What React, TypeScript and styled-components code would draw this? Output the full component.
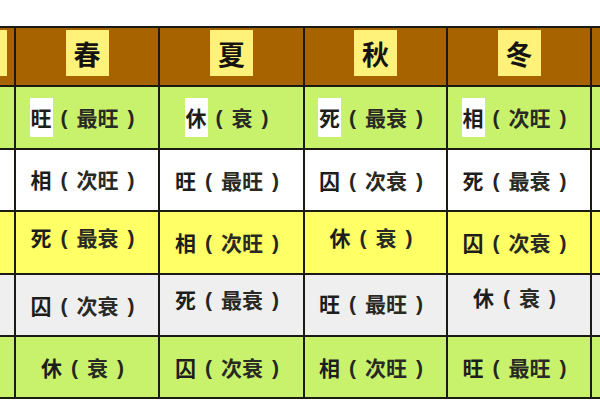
import React from "react";
import styled, { createGlobalStyle } from "styled-components";

const Global = createGlobalStyle`
  html, body { margin: 0; padding: 0; background: #ffffff; }
  body { width: 600px; height: 400px; overflow: hidden; font-family: "Noto Sans CJK SC", "Noto Sans", sans-serif; }
`;

const Page = styled.div`
  width: 600px;
  height: 400px;
  padding-top: 26px;
  box-sizing: border-box;
  background: #ffffff;
`;

const Grid = styled.div`
  display: grid;
  grid-template-columns: 14px 142px 143px 141px 142px 1fr;
  grid-template-rows: 57px 61px 60px 61px 60px 60px;
  gap: 2px;
  padding: 2px 0;
  background: #1c1a14;
`;

const HeadCell = styled.div<{ $edge?: "left" | "right" }>`
  background: #a66300;
  display: flex;
  align-items: flex-start;
  justify-content: ${(p) => (p.$edge === "left" ? "flex-end" : "center")};
  padding-top: 2px;
  padding-right: ${(p) => (p.$edge === "left" ? "7px" : "0")};
  overflow: hidden;
`;

const SeasonBox = styled.div`
  flex: 0 0 43px;
  width: 43px;
  height: 46px;
  background: #fff27a;
  display: flex;
  align-items: center;
  justify-content: center;
  font-size: 27px;
  font-weight: 700;
  color: #161410;
  line-height: 1;
`;

const rowColors = ["#c9f26c", "#ffffff", "#ffff66", "#efefef", "#c9f26c"];

const BodyCell = styled.div<{ $row: number }>`
  background: ${(p) => rowColors[p.$row]};
  display: flex;
  align-items: center;
  justify-content: center;
  overflow: hidden;
`;

const Entry = styled.div<{ $dy: number }>`
  display: flex;
  align-items: center;
  font-size: 21px;
  font-weight: 700;
  color: #1d1d1b;
  line-height: 1;
  transform: translateY(${(p) => p.$dy}px);
`;

const Lead = styled.span<{ $hl: boolean }>`
  display: inline-block;
  padding: 9px 1px;
  margin: 0 -1px;
  background: ${(p) => (p.$hl ? "#ffffff" : "transparent")};
`;

const Paren = styled.span`
  display: inline-block;
  margin: 0 9px;
  font-family: "Liberation Sans", sans-serif;
  font-weight: 700;
  color: #26261f;
`;

const Note = styled.span`
  color: #2a2a24;
`;

const seasons = ["春", "夏", "秋", "冬"];

type Item = { s: string; n: string; dy?: number };

const rows: Item[][] = [
  [
    { s: "旺", n: "最旺" },
    { s: "休", n: "衰" },
    { s: "死", n: "最衰" },
    { s: "相", n: "次旺" },
  ],
  [
    { s: "相", n: "次旺", dy: -1 },
    { s: "旺", n: "最旺" },
    { s: "囚", n: "次衰" },
    { s: "死", n: "最衰" },
  ],
  [
    { s: "死", n: "最衰", dy: -5 },
    { s: "相", n: "次旺" },
    { s: "休", n: "衰", dy: -5 },
    { s: "囚", n: "次衰" },
  ],
  [
    { s: "囚", n: "次衰" },
    { s: "死", n: "最衰", dy: -6 },
    { s: "旺", n: "最旺", dy: -2 },
    { s: "休", n: "衰", dy: -8 },
  ],
  [
    { s: "休", n: "衰" },
    { s: "囚", n: "次衰" },
    { s: "相", n: "次旺" },
    { s: "旺", n: "最旺" },
  ],
];

export default function App() {
  return (
    <>
      <Global />
      <Page>
        <Grid>
          <HeadCell $edge="left">
            <SeasonBox>季</SeasonBox>
          </HeadCell>
          {seasons.map((s) => (
            <HeadCell key={s}>
              <SeasonBox>{s}</SeasonBox>
            </HeadCell>
          ))}
          <HeadCell $edge="right" />
          {rows.map((row, r) => (
            <React.Fragment key={r}>
              <BodyCell $row={r} />
              {row.map((it, c) => (
                <BodyCell $row={r} key={c}>
                  <Entry $dy={it.dy ?? 0}>
                    <Lead $hl={r === 0}>{it.s}</Lead>
                    <Paren>(</Paren>
                    <Note>{it.n}</Note>
                    <Paren>)</Paren>
                  </Entry>
                </BodyCell>
              ))}
              <BodyCell $row={r} />
            </React.Fragment>
          ))}
        </Grid>
      </Page>
    </>
  );
}
